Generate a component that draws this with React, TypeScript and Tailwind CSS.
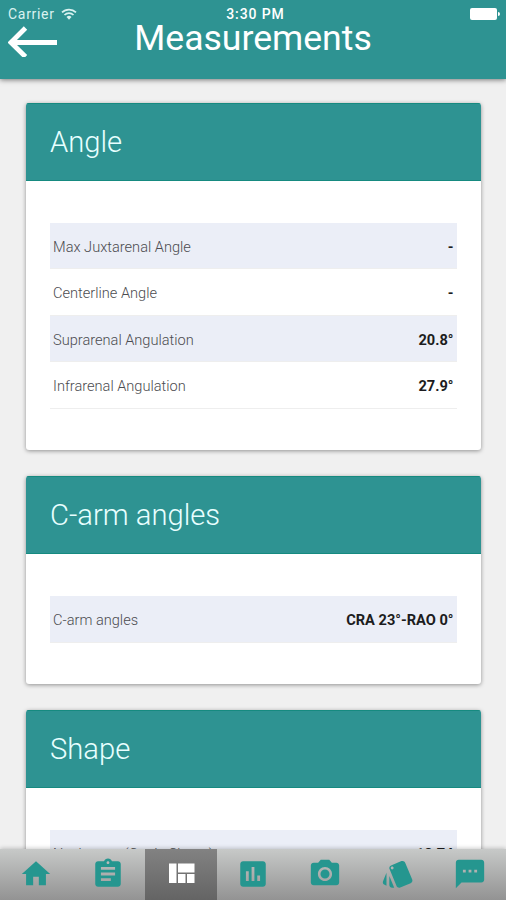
import React from 'react';

type Row = { label: string; value: string };

const TABS: { name: string; path: string }[] = [
  { name: 'Home', path: 'M10 20v-6h4v6h5v-8h3L12 3 2 12h3v8z' },
  {
    name: 'Report',
    path: 'M19 3h-4.18C14.4 1.84 13.3 1 12 1c-1.3 0-2.4.84-2.82 2H5c-1.1 0-2 .9-2 2v14c0 1.1.9 2 2 2h14c1.1 0 2-.9 2-2V5c0-1.1-.9-2-2-2zm-7 0c.55 0 1 .45 1 1s-.45 1-1 1-1-.45-1-1 .45-1 1-1zm2 14H7v-2h7v2zm3-4H7v-2h10v2zm0-4H7V7h10v2z',
  },
  { name: 'Measurements', path: 'M10 18h5v-6h-5v6zm-6 0h5V5H4v13zm12 0h5v-6h-5v6zM10 5v6h11V5H10z' },
  {
    name: 'Charts',
    path: 'M19 3H5c-1.1 0-2 .9-2 2v14c0 1.1.9 2 2 2h14c1.1 0 2-.9 2-2V5c0-1.1-.9-2-2-2zM9 17H7v-7h2v7zm4 0h-2V7h2v10zm4 0h-2v-4h2v4z',
  },
  {
    name: 'Camera',
    path: 'M12 8.8a3.2 3.2 0 1 0 0 6.4 3.2 3.2 0 0 0 0-6.4zM9 2L7.17 4H4c-1.1 0-2 .9-2 2v12c0 1.1.9 2 2 2h16c1.1 0 2-.9 2-2V6c0-1.1-.9-2-2-2h-3.17L15 2H9zm3 15c-2.76 0-5-2.24-5-5s2.24-5 5-5 5 2.24 5 5-2.24 5-5 5z',
  },
  {
    name: 'Devices',
    path: 'M2.53 19.65l1.34.56v-9.03l-2.43 5.86c-.41 1.02.08 2.19 1.09 2.61zm19.5-3.7L17.07 3.98c-.31-.75-1.04-1.21-1.81-1.23-.26 0-.53.04-.79.15L7.1 5.95c-.75.31-1.21 1.03-1.23 1.8-.01.27.04.54.15.8l4.96 11.97c.31.76 1.05 1.22 1.83 1.23.26 0 .52-.05.77-.15l7.36-3.05c1.02-.42 1.51-1.59 1.09-2.6zM7.88 8.75c-.55 0-1-.45-1-1s.45-1 1-1 1 .45 1 1-.45 1-1 1zm-2 11c0 1.1.9 2 2 2h1.45l-3.45-8.34v6.34z',
  },
  {
    name: 'Messages',
    path: 'M20 2H4c-1.1 0-1.99.9-1.99 2L2 22l4-4h14c1.1 0 2-.9 2-2V4c0-1.1-.9-2-2-2zM9 11H7V9h2v2zm4 0h-2V9h2v2zm4 0h-2V9h2v2z',
  },
];

function Card({ title, rows }: { title: string; rows: Row[] }) {
  return (
    <section className="shrink-0 overflow-hidden rounded-[3px] bg-white shadow-[0_1px_4px_rgba(0,0,0,0.4)]">
      <h2 className="flex h-[78px] items-center border-y border-[#168a80] bg-[#2e9392] px-6 pt-[2px] text-[29.2px] font-light text-[#e8ffff]">
        {title}
      </h2>
      <div className="px-6 pt-[42px] pb-[41.5px]">
        {rows.map((row, i) => (
          <div
            key={row.label}
            className={`flex h-[46.5px] items-center justify-between border-b border-[#eeeeee] px-[3px] pt-[5px] text-[14.6px] ${
              i % 2 === 0 ? 'bg-[#ebeef7]' : 'bg-white'
            }`}
          >
            <span className="font-light text-[#4c4c50]">{row.label}</span>
            <span className="font-bold text-[#1c1c20]">{row.value}</span>
          </div>
        ))}
      </div>
    </section>
  );
}

export default function App() {
  return (
    <div className="flex h-[900px] w-[506px] flex-col overflow-hidden bg-[#f0f0f0] font-['Roboto',sans-serif]">
      <header className="z-10 h-[79px] shrink-0 bg-[#2e9392] text-white shadow-[0_1px_5px_rgba(0,0,0,0.5)]">
        <div className="grid h-[22px] grid-cols-3 items-center pt-[5px] pr-[6px] pl-2 text-[14px] leading-none">
          <div className="flex items-center gap-[6px] text-[#d9f2f0]">
            <span className="w-[47px] tracking-[0.7px]">Carrier</span>
            <svg width="16" height="12" viewBox="0 0 16 12" fill="none" stroke="currentColor" strokeWidth="1.7">
              <path d="M1 4.4a10 10 0 0 1 14 0M3.5 7a6.4 6.4 0 0 1 9 0" />
              <path d="M5.5 9a3.6 3.6 0 0 1 5 0L8 11.7z" fill="currentColor" stroke="none" />
            </svg>
          </div>
          <div className="pl-[3px] text-center font-medium tracking-[0.9px]">3:30 PM</div>
          <div className="flex items-center justify-end">
            <div className="h-3 w-[27px] rounded-[2px] bg-white" />
            <div className="ml-px h-1 w-[2px] rounded-r-full bg-white" />
          </div>
        </div>
        <div className="grid h-[38px] grid-cols-[60px_1fr_60px] items-center">
          <svg className="ml-2" width="50" height="32" viewBox="0 0 50 32" fill="none" stroke="white" strokeWidth="4.8">
            <path d="M49 17.5H3M17.5 3L3 17.5l14.5 14.3" />
          </svg>
          <h1 className="pb-[5px] text-center text-[35.6px] leading-[33px] whitespace-nowrap">Measurements</h1>
        </div>
      </header>
      <main className="flex min-h-0 flex-1 flex-col gap-[26px] overflow-hidden pt-[23.5px] pr-[25.5px] pl-[26px]">
        <Card
          title="Angle"
          rows={[
            { label: 'Max Juxtarenal Angle', value: '-' },
            { label: 'Centerline Angle', value: '-' },
            { label: 'Suprarenal Angulation', value: '20.8°' },
            { label: 'Infrarenal Angulation', value: '27.9°' },
          ]}
        />
        <Card title="C-arm angles" rows={[{ label: 'C-arm angles', value: 'CRA 23°-RAO 0°' }]} />
        <Card title="Shape" rows={[{ label: 'Neck cone (Conic Shape)', value: '18.74' }]} />
      </main>
      <nav className="z-10 grid h-[51px] shrink-0 grid-cols-7 bg-linear-to-b from-[#c7c9c8] to-[#939393] shadow-[0_-1px_4px_rgba(0,0,0,0.2)]">
        {TABS.map((tab) => {
          const active = tab.name === 'Measurements';
          return (
            <button
              key={tab.name}
              aria-label={tab.name}
              className={`flex items-center justify-center pb-[2px] ${
                active ? 'bg-linear-to-b from-[#828282] to-[#646464] text-white' : 'text-[#25968f]'
              }`}
            >
              <svg className={active ? 'size-9' : 'size-[34px]'} viewBox="0 0 24 24" fill="currentColor">
                <path d={tab.path} />
              </svg>
            </button>
          );
        })}
      </nav>
    </div>
  );
}
